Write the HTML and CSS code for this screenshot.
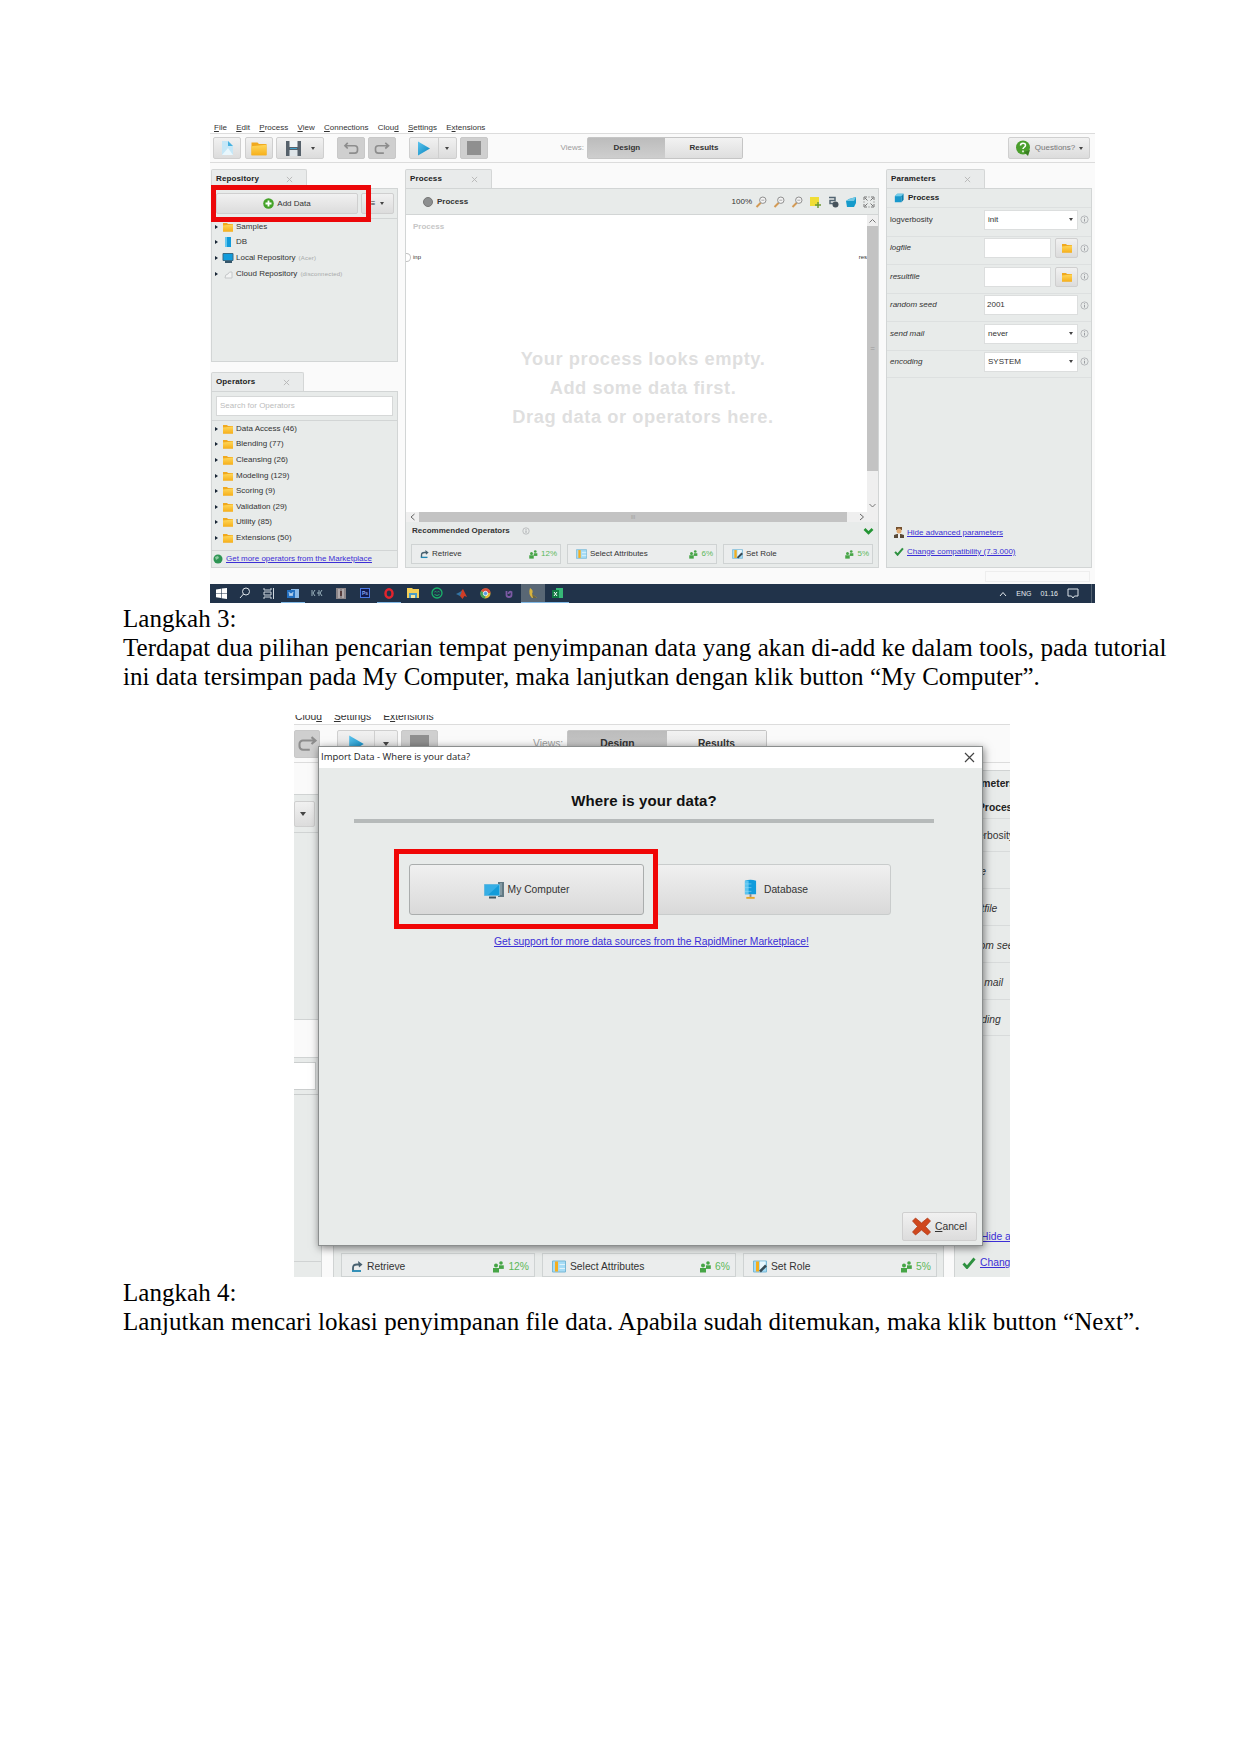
FILE: index.html
```html
<!DOCTYPE html>
<html lang="id">
<head>
<meta charset="utf-8">
<title>Langkah 3</title>
<link rel="stylesheet" href="styles.css">
</head>
<body>
<svg class="sprite" aria-hidden="true">
  <defs>
    <linearGradient id="blue" x1="0" y1="0" x2="1" y2="1"><stop offset="0" stop-color="#5cc4ee"/><stop offset="1" stop-color="#0583bd"/></linearGradient>
    <linearGradient id="yel" x1="0" y1="0" x2="0" y2="1"><stop offset="0" stop-color="#ffd75a"/><stop offset="1" stop-color="#f6b01c"/></linearGradient>
  </defs>
  <symbol id="folder" viewBox="0 0 12 10"><path d="M1 1h4l1 1h5v7.500H1z" fill="#f0a91f"/><path d="M1 3.500l10-1v7H1z" fill="url(#yel)"/></symbol>
  <symbol id="play" viewBox="0 0 14 14"><path d="M1 0l12 7-12 7z" fill="url(#blue)"/></symbol>
  <symbol id="redo" viewBox="0 0 16 14"><path d="M15 4H4a3 3 0 0 0-3 3v2a3 3 0 0 0 3 3h6M11.500 1L15 4l-3.500 3" fill="none" stroke="#8d8d8d" stroke-width="1.800"/></symbol>
  <symbol id="tab-x" viewBox="0 0 8 8"><path d="M1 1l6 6M7 1L1 7" stroke="#b4b4b4" stroke-width="1"/></symbol>
  <symbol id="people" viewBox="0 0 12 12"><g fill="#46a546"><circle cx="4" cy="4.500" r="2"/><path d="M1 7h6v4.500H1z"/><circle cx="9" cy="2" r="1.800"/><path d="M7 4.300h4.800v3.600H7z"/></g></symbol>
  <symbol id="retrieve" viewBox="0 0 12 12"><path d="M2 10V7.500Q2 4 6 4h3" fill="none" stroke="#47606f" stroke-width="1.800"/><path d="M7 .5L11.500 4 8 7z" fill="#47606f"/><path d="M1 10.500h9" stroke="#2187b3" stroke-width="1.800"/></symbol>
  <symbol id="select" viewBox="0 0 14 12"><path d="M.5.5h13v11H.5z" fill="#a6dcf6" stroke="#78b8d5"/><path d="M3 1h3v10H3z" fill="#f5ae1e"/><path d="M7.500 4H13M7.500 8H13" stroke="#dff3fb"/></symbol>
  <symbol id="role" viewBox="0 0 14 12"><path d="M.5.5h13v11H.5z" fill="#a6dcf6" stroke="#78b8d5"/><path d="M3 1h3v10H3z" fill="#f5ae1e"/><path d="M7 1h5.500v4L7 11z" fill="#e7f6fd"/><path d="M7 11l6-6" stroke="#374a55" stroke-width="2.500"/></symbol>
  <symbol id="check" viewBox="0 0 14 12"><path d="M1.500 6.500l3.500 4L12.500 1.500" fill="none" stroke="#2e9140" stroke-width="2.800"/></symbol>
  <symbol id="cube" viewBox="0 0 12 12"><path d="M1 4l3-3h7.500l-2.500 3v7H1z" fill="#1898cc"/><path d="M1 4l3-3h7.500L9 4z" fill="#75cdea"/><path d="M9 4l2.500-3v7L9 11z" fill="#077eae"/></symbol>
  <symbol id="info" viewBox="0 0 10 10"><circle cx="5" cy="5" r="4" fill="none" stroke="#a2a5a8" stroke-width=".8"/><path d="M5 4.300v3M5 2.500v1" stroke="#92959a"/></symbol>
  <symbol id="lens" viewBox="0 0 12 12"><path d="M1.500 11L6 6.500" stroke="#d39a55" stroke-width="2"/><circle cx="7.800" cy="4.200" r="3.200" fill="#f4f4f4" stroke="#8f8f8f"/><path d="M6.300 4.200h3" stroke="#999" stroke-width=".8"/></symbol>
  <symbol id="db" viewBox="0 0 14 22"><path d="M1 1.500Q7-.5 13 1.500V16H1z" fill="#109bdc"/><path d="M1 1.500h4V16H1z" fill="#5bc4f0"/><path d="M1 5h7M1 9h7M1 13h7" stroke="#98ddf7" stroke-width=".6"/><path d="M6 16h2v3H6z" fill="#888"/><path d="M2.500 19h9v2h-9z" fill="#e3a52a"/></symbol>
</svg>

<main class="page">
  <section class="shot main-shot">
    <nav class="menu"><span><u>F</u>ile</span><span><u>E</u>dit</span><span><u>P</u>rocess</span><span><u>V</u>iew</span><span><u>C</u>onnections</span><span>Clou<u>d</u></span><span><u>S</u>ettings</span><span>E<u>x</u>tensions</span></nav>
    <div class="toolbar">
      <div class="btn b28"><svg width="14" height="16" viewBox="0 0 14 16"><path d="M2 1h6l5 5v9H2z" fill="#c5e7f7"/><path d="M8 1l5 5H8z" fill="#48b1df"/><path d="M2 15L8 8l5 7z" fill="#e9f7fd"/></svg></div>
      <div class="btn b28"><svg width="18" height="15"><use href="#folder"/></svg></div>
      <div class="btn b48"><svg width="15" height="15" viewBox="0 0 15 15"><path d="M0 0h15v15H0z" fill="#56616b"/><path d="M3.500 0h8v6h-8z" fill="#f0f3f5"/><path d="M3.500 9h8v6h-8z" fill="#dfe5e9"/><path d="M4 7.500h7" stroke="#3f9fc9"/></svg><i class="caret"></i></div>
      <div class="btn b28 off gap12"><svg width="16" height="13" viewBox="0 0 16 14"><path d="M1.500 4H12a3 3 0 0 1 3 3v2a3 3 0 0 1-3 3H6M4.500 1L1.500 4l3 3" fill="none" stroke="#8d8d8d" stroke-width="1.800"/></svg></div>
      <div class="btn b28 off"><svg width="16" height="13"><use href="#redo"/></svg></div>
      <div class="btn b48 gap12 split"><span><svg width="14" height="15"><use href="#play"/></svg></span><i class="caret"></i></div>
      <div class="btn b28 off"><i class="stop"></i></div>
      <span class="views">Views:</span>
      <div class="switch"><b class="on">Design</b><b>Results</b></div>
      <div class="btn help"><svg width="16" height="16" viewBox="0 0 16 16"><circle cx="8" cy="7.500" r="7" fill="#4a9e2c"/><path d="M9 12l6-2-2 6z" fill="#397f20"/><path d="M5.500 5.500q0-2.300 2.500-2.300t2.500 2q0 1.300-1.500 2.300-1 .7-1 1.500M8 10.500v1.700" stroke="#fff" stroke-width="1.500" fill="none"/></svg>Questions?<i class="caret"></i></div>
    </div>
    <div class="workspace">
      <div class="col-left">
        <div class="tab w96">Repository<svg width="7" height="7"><use href="#tab-x"/></svg></div>
        <div class="panel repo">
          <div class="repo-bar"><div class="btn add"><svg width="11" height="11" viewBox="0 0 11 11"><circle cx="5.500" cy="5.500" r="5.300" fill="#45a329"/><path d="M5.500 2.500v6M2.500 5.500h6" stroke="#fff" stroke-width="1.800"/></svg>Add Data</div><div class="btn more"><span>≡</span><i class="caret"></i></div><div class="mark mark-add"></div></div>
          <ul class="tree">
            <li><i></i><svg width="12" height="10"><use href="#folder"/></svg>Samples</li>
            <li><i></i><svg width="12" height="10" viewBox="0 0 12 10"><path d="M3 0h6v10H3z" fill="#119bdb"/><path d="M3 0h2v10H3z" fill="#65c7ee"/></svg>DB</li>
            <li><i></i><svg width="12" height="10" viewBox="0 0 12 10"><path d="M1 .5h10v7H1z" fill="#119bdb" stroke="#386b86"/><path d="M3 9h7" stroke="#36566a" stroke-width="2"/></svg>Local Repository <small>(Acer)</small></li>
            <li><i></i><svg width="12" height="10" viewBox="0 0 12 10"><path d="M3 9h7V3Q7 2 6 5 3 5 3 9z" fill="#f2f3f3" stroke="#c5c8c9"/></svg>Cloud Repository <small>(disconnected)</small></li>
          </ul>
        </div>
        <div class="tab w93">Operators<svg width="7" height="7"><use href="#tab-x"/></svg></div>
        <div class="panel ops">
          <div class="search-row"><div class="search">Search for Operators</div></div>
          <ul class="tree">
            <li><i></i><svg width="12" height="10"><use href="#folder"/></svg>Data Access (46)</li>
            <li><i></i><svg width="12" height="10"><use href="#folder"/></svg>Blending (77)</li>
            <li><i></i><svg width="12" height="10"><use href="#folder"/></svg>Cleansing (26)</li>
            <li><i></i><svg width="12" height="10"><use href="#folder"/></svg>Modeling (129)</li>
            <li><i></i><svg width="12" height="10"><use href="#folder"/></svg>Scoring (9)</li>
            <li><i></i><svg width="12" height="10"><use href="#folder"/></svg>Validation (29)</li>
            <li><i></i><svg width="12" height="10"><use href="#folder"/></svg>Utility (85)</li>
            <li><i></i><svg width="12" height="10"><use href="#folder"/></svg>Extensions (50)</li>
          </ul>
          <div class="market"><svg width="10" height="10" viewBox="0 0 10 10"><circle cx="5" cy="5" r="4.500" fill="#2e9554"/><path d="M2 3l3-1 1 2-3 2z" fill="#8dcba1"/></svg><a>Get more operators from the Marketplace</a></div>
        </div>
      </div>
      <div class="col-mid">
        <div class="tab w87">Process<svg width="7" height="7"><use href="#tab-x"/></svg></div>
        <div class="panel proc">
          <div class="proc-head"><i class="dot"></i><b>Process</b><span class="zoom">100%</span>
            <svg width="12" height="12"><use href="#lens"/></svg><svg width="12" height="12"><use href="#lens"/></svg><svg width="12" height="12"><use href="#lens"/></svg>
            <svg width="12" height="12" viewBox="0 0 12 12"><path d="M1 1h9v9H1z" fill="#f0dd36"/><path d="M9 6v6M6 9h6" stroke="#6c9a35" stroke-width="1.500"/></svg>
            <svg width="12" height="12" viewBox="0 0 12 12"><path d="M2 1.500h6v3H3v3h4" fill="none" stroke="#536572" stroke-width="1.500"/><circle cx="8.500" cy="8.500" r="3" fill="#46525b"/></svg>
            <svg width="12" height="12" viewBox="0 0 12 12"><path d="M1 5l3-2 7-2v6l-2 4H2z" fill="#169bcb"/><path d="M1 5l3-2 7-2-2 4z" fill="#72c8e4"/></svg>
            <svg width="12" height="12" viewBox="0 0 12 12"><path d="M1 4V1h3M8 1h3v3M11 8v3H8M4 11H1V8M2 2l2.500 2.500M10 2L7.500 4.500M2 10l2.500-2.500M10 10L7.500 7.500M1 5.500v1M11 5.500v1M5.500 1h1M5.500 11h1" fill="none" stroke="#777"/></svg>
          </div>
          <div class="canvas-row">
            <div class="canvas">
              <div class="canvas-name">Process</div>
              <div class="ports"><span><i class="port"></i>inp</span><span>res</span></div>
              <div class="empty">Your process looks empty.<br><span>Add some data first.</span><br><em>Drag data or operators here.</em></div>
            </div>
            <div class="vbar"><svg width="9" height="11" viewBox="0 0 9 11"><path d="M1.500 7.500l3-3 3 3" fill="none" stroke="#777"/></svg><div class="vthumb">=</div><svg width="9" height="11" viewBox="0 0 9 11"><path d="M1.500 4l3 3 3-3" fill="none" stroke="#777"/></svg></div>
          </div>
          <div class="hbar"><svg width="13" height="10" viewBox="0 0 13 10"><path d="M8.500 2L5 5l3.500 3" fill="none" stroke="#666"/></svg><div class="hthumb">III</div><svg width="13" height="10" viewBox="0 0 13 10"><path d="M4 2l3.500 3L4 8" fill="none" stroke="#666"/></svg></div>
          <div class="rec-head"><b>Recommended Operators</b><svg width="8" height="8"><use href="#info"/></svg><svg class="chev" width="11" height="8" viewBox="0 0 11 8"><path d="M1.500 2l4 4 4-4" fill="none" stroke="#239534" stroke-width="2.600"/></svg></div>
          <div class="cards">
            <div class="card"><svg width="9" height="10"><use href="#retrieve"/></svg>Retrieve<svg class="ppl" width="10" height="9"><use href="#people"/></svg><span>12%</span></div>
            <div class="card"><svg width="11" height="10"><use href="#select"/></svg>Select Attributes<svg class="ppl" width="10" height="9"><use href="#people"/></svg><span>6%</span></div>
            <div class="card"><svg width="11" height="10"><use href="#role"/></svg>Set Role<svg class="ppl" width="10" height="9"><use href="#people"/></svg><span>5%</span></div>
          </div>
        </div>
      </div>
      <div class="col-right">
        <div class="tab w99">Parameters<svg width="7" height="7"><use href="#tab-x"/></svg></div>
        <div class="panel params">
          <div class="param-head"><svg width="10" height="10"><use href="#cube"/></svg>Process</div>
          <div class="prow"><label class="plain">logverbosity</label><div class="field">init<i class="caret"></i></div><svg width="9" height="9"><use href="#info"/></svg></div>
          <div class="prow"><label>logfile</label><div class="field short"></div><div class="btn pick"><svg width="12" height="10"><use href="#folder"/></svg></div><svg width="9" height="9"><use href="#info"/></svg></div>
          <div class="prow"><label>resultfile</label><div class="field short"></div><div class="btn pick"><svg width="12" height="10"><use href="#folder"/></svg></div><svg width="9" height="9"><use href="#info"/></svg></div>
          <div class="prow"><label>random seed</label><div class="field num">2001</div><svg width="9" height="9"><use href="#info"/></svg></div>
          <div class="prow"><label>send mail</label><div class="field">never<i class="caret"></i></div><svg width="9" height="9"><use href="#info"/></svg></div>
          <div class="prow last"><label>encoding</label><div class="field">SYSTEM<i class="caret"></i></div><svg width="9" height="9"><use href="#info"/></svg></div>
          <div class="plinks">
            <div><svg width="10" height="11" viewBox="0 0 10 11"><path d="M2 0h6v3H2z" fill="#74502d"/><circle cx="5" cy="4" r="2.500" fill="#e1aa74"/><path d="M0 11V8l3-1h4l3 1v3z" fill="#594937"/><path d="M4 7h2v4H4z" fill="#eee"/></svg><a>Hide advanced parameters</a></div>
            <div><svg width="10" height="9"><use href="#check"/></svg><a>Change compatibility (7.3.000)</a></div>
          </div>
        </div>
        <div class="memory"></div>
      </div>
    </div>
    <footer class="taskbar">
      <span><svg width="11" height="11" viewBox="0 0 11 11"><path d="M0 1.500l5-.8V5H0zM5.600.6L11 0v5H5.600zM0 5.600h5V10l-5-.8zM5.600 5.600H11V11l-5.400-.8z" fill="#fff"/></svg></span>
      <span><svg width="12" height="12" viewBox="0 0 12 12"><circle cx="7" cy="4.500" r="3.500" fill="none" stroke="#dfe6eb"/><path d="M4.500 7L1 11" stroke="#dfe6eb"/></svg></span>
      <span><svg width="12" height="11" viewBox="0 0 12 11"><path d="M1 0v2h7V0M1 11V9h7v2M1 4h7v3H1zM10.500 0v11" fill="none" stroke="#cfd8df"/></svg></span>
      <span class="open"><svg width="12" height="11" viewBox="0 0 12 11"><path d="M4 1h8v9H4z" fill="#8dbbe9"/><path d="M0 2h8v8H0z" fill="#2370c1"/><path d="M2 4l1 4 1-3 1 3 1-4" fill="none" stroke="#d9e8f8" stroke-width=".8"/></svg></span>
      <span><svg width="12" height="10" viewBox="0 0 12 10"><path d="M1 2v6M4 2L2 5l2 3M6 5h2M8 2v6M11 2L9 5l2 3" stroke="#9bb2bd" fill="none"/></svg></span>
      <span><svg width="10" height="11" viewBox="0 0 10 11"><path d="M0 0h10v11H0z" fill="#8b8588"/><path d="M3 1v9M7 1v9" stroke="#d3cccd"/><path d="M4 3h2v5H4z" fill="#563d3d"/></svg></span>
      <span><b class="ps">Ps</b></span>
      <span class="open"><svg width="10" height="11" viewBox="0 0 10 11"><ellipse cx="5" cy="5.500" rx="3.500" ry="4.200" fill="none" stroke="#e2242d" stroke-width="2.500"/></svg></span>
      <span><svg width="12" height="10" viewBox="0 0 12 10"><path d="M0 0h5l1 1h6v9H0z" fill="#f4cf57"/><path d="M2 5h8v5H2z" fill="#4c9cc5"/><path d="M4 7h4v3H4z" fill="#f8e59a"/></svg></span>
      <span><svg width="12" height="12" viewBox="0 0 12 12"><circle cx="6" cy="6" r="5" fill="none" stroke="#1ab36b" stroke-width="1.300"/><path d="M3.500 5q1-1 2 0M6.500 5q1-1 2 0M3.500 7.500q2.500 2 5 0" fill="none" stroke="#1ab36b"/></svg></span>
      <span><svg width="11" height="11" viewBox="0 0 11 11"><path d="M3.500 5L7 1l4 8-2.500-1L6.500 11 4 8z" fill="#cf3d26"/><path d="M0 6l4-2 2-1-2 5z" fill="#3374a4"/></svg></span>
      <span><svg width="11" height="11" viewBox="0 0 11 11"><circle cx="5.500" cy="5.500" r="5" fill="#e3b934"/><path d="M1 3a5 5 0 0 1 9.500 2H5z" fill="#d94a3c"/><path d="M1 3a5 5 0 0 0 4 7.500L6 6z" fill="#42a058"/><circle cx="5.500" cy="5.500" r="2.200" fill="#5a9ee0" stroke="#fff" stroke-width=".8"/></svg></span>
      <span><svg width="10" height="11" viewBox="0 0 10 11"><path d="M2.500 3v4q0 2 2.500 2t2.500-2V4Q5 3 4.500 6" fill="none" stroke="#7d5aa5" stroke-width="1.800"/></svg></span>
      <span class="open active"><svg width="10" height="11" viewBox="0 0 10 11"><path d="M2 0q4 2 2 6l5 4H4Q0 6 2 0z" fill="#d7b33f"/><path d="M4 6l5 4H5z" fill="#6d6542"/></svg></span>
      <span class="open"><svg width="11" height="11" viewBox="0 0 11 11"><path d="M4 0h7v10H4z" fill="#37b777"/><path d="M0 2h7v8H0z" fill="#127943"/><path d="M2 4l3 4M5 4L2 8" stroke="#fff"/></svg></span>
      <div class="tray"><svg width="8" height="6" viewBox="0 0 8 6"><path d="M1 5l3-3.500L7 5" fill="none" stroke="#e4e9ed"/></svg><em>ENG</em><em>01.16</em><svg width="12" height="11" viewBox="0 0 12 11"><path d="M1 1h10v7H7.500L6 10 4.500 8H1z" fill="none" stroke="#dce3e8"/></svg></div>
    </footer>
  </section>

  <div class="copy">Langkah 3:<br>Terdapat dua pilihan pencarian tempat penyimpanan data yang akan di-add ke dalam tools, pada tutorial<br>ini data tersimpan pada My Computer, maka lanjutkan dengan klik button “My Computer”.</div>

  <section class="shot import-shot">
    <nav class="menu"><span>Clou<u>d</u></span><span><u>S</u>ettings</span><span>E<u>x</u>tensions</span></nav>
    <div class="toolbar">
      <div class="btn off r26"><svg width="19" height="16"><use href="#redo"/></svg></div>
      <div class="btn split big"><span><svg width="17" height="18"><use href="#play"/></svg></span><i class="caret"></i></div>
      <div class="btn off stopbtn"><i class="stop"></i></div>
      <span class="views">Views:</span>
      <div class="switch"><b class="on">Design</b><b>Results</b></div>
    </div>
    <div class="behind">
      <div class="slice">
        <div class="s-gap"></div>
        <div class="s-bar"><div class="btn"><i class="caret"></i></div></div>
        <div class="s-tree"></div>
        <div class="s-white"></div>
        <div class="s-search"><div></div></div>
        <div class="s-ops"></div>
        <div class="s-foot"></div>
      </div>
      <div class="strip">
        <div class="cards">
          <div class="card"><svg width="12" height="13"><use href="#retrieve"/></svg>Retrieve<svg class="ppl" width="12" height="12"><use href="#people"/></svg><span>12%</span></div>
          <div class="card"><svg width="14" height="13"><use href="#select"/></svg>Select Attributes<svg class="ppl" width="12" height="12"><use href="#people"/></svg><span>6%</span></div>
          <div class="card"><svg width="14" height="13"><use href="#role"/></svg>Set Role<svg class="ppl" width="12" height="12"><use href="#people"/></svg><span>5%</span></div>
        </div>
      </div>
      <div class="edge">
        <b class="e-tab">Parameters</b><b class="e-head">Process</b>
        <span class="plain">logverbosity</span><span>logfile</span><span>resultfile</span><span>random seed</span><span>send mail</span><span>encoding</span>
        <div class="e-links"><a class="e-hide">Hide advanced</a><div><svg width="14" height="12"><use href="#check"/></svg><a>Change</a></div></div>
      </div>
    </div>
    <div class="dialog">
      <div class="title"><span>Import Data - Where is your data?</span><svg width="11" height="11" viewBox="0 0 11 11"><path d="M1 1l9 9M10 1l-9 9" stroke="#444" stroke-width="1.200"/></svg></div>
      <h2>Where is your data?</h2>
      <div class="choices">
        <div class="choice first"><svg width="21" height="18" viewBox="0 0 21 18"><path d="M14 1h6v15h-6z" fill="#607883"/><path d="M17 2v12" stroke="#a8bcc4"/><path d="M.5 3.500h15v11H.5z" fill="#139cda" stroke="#62b8df"/><path d="M1 4h14L4 14H1z" fill="#36aee5"/><path d="M5 16.500h7" stroke="#3d5560" stroke-width="2"/></svg>My Computer<div class="mark mark-pc"></div></div>
        <div class="choice second"><svg class="dbi" width="13" height="21"><use href="#db"/></svg>Database</div>
      </div>
      <a class="support">Get support for more data sources from the RapidMiner Marketplace!</a>
      <div class="actions"><div class="btn cancel"><svg width="19" height="19" viewBox="0 0 19 19"><path d="M3.500 1L9.500 6 15.500 1 18.500 4 13.500 9.500 18.500 15 15.500 18 9.500 13 3.500 18 .5 15 5.500 9.500.5 4z" fill="#cf481e" stroke="#ad3716" stroke-width=".7"/></svg><span><u>C</u>ancel</span></div></div>
    </div>
  </section>

  <div class="copy">Langkah 4:<br>Lanjutkan mencari lokasi penyimpanan file data. Apabila sudah ditemukan, maka klik button “Next”.</div>
</main>
</body>
</html>
```
FILE: styles.css
```css
* { box-sizing: border-box; }
body { margin: 0; background: #fff; font-family: "Liberation Sans", Arial, sans-serif; }
.sprite { position: absolute; width: 0; height: 0; }
svg { display: block; flex: none; }
ul { list-style: none; margin: 0; padding: 0; }
a { color: #3c2fd6; text-decoration: underline; }
em { font-style: normal; }
.page { width: 1240px; height: 1755px; padding-top: 116px; overflow: hidden; }

.copy { margin-left: 123px; font: 25px/29px "Liberation Serif", "Times New Roman", serif; color: #000; white-space: nowrap; padding-top: 1px; letter-spacing: .032px; }

/* Shared application chrome */
.shot { position: relative; overflow: hidden; background: #fafafa; color: #333; white-space: nowrap; }
.menu { display: flex; background: #fff; border-bottom: 1px solid #dcdcdc; }
.toolbar { display: flex; align-items: center; background: #fafafa; border-bottom: 1px solid #dcdcdc; }
.btn { display: flex; align-items: center; justify-content: center; border: 1px solid #cfcfcf; border-radius: 2px; background: linear-gradient(#f1f1f1, #dcdcdc); flex: none; }
.btn.off { background: #cfcfcf; border-color: #c8c8c8; }
.caret { width: 0; height: 0; border: 2.5px solid transparent; border-top: 3.5px solid #444; border-bottom: 0; flex: none; }
.stop { width: 14px; height: 14px; background: #8f8f8f; }
.switch { display: flex; border: 1px solid #c5c5c5; border-radius: 2px; }
.switch b { display: flex; align-items: center; justify-content: center; background: linear-gradient(#f2f2f2, #dedede); }
.switch .on { background: linear-gradient(#bcbcbc, #cecece); }
.views { color: #9d9d9d; }
.mark { position: absolute; border: 5px solid #f00606; }

/* Main window */
.main-shot { width: 885px; height: 487px; margin-left: 210px; font-size: 8px; line-height: 10px; display: flex; flex-direction: column; }
.main-shot .menu { height: 18px; padding: 7px 0 0 4px; gap: 9.3px; flex: none; }
.main-shot .toolbar { height: 29px; padding: 0 5px 0 3px; gap: 3.5px; flex: none; }
.main-shot .toolbar .btn { height: 22px; }
.toolbar .b28 { width: 28px; }
.toolbar .b48 { width: 48px; gap: 10px; }
.toolbar .gap12 { margin-left: 9px; }
.toolbar .split { gap: 0; justify-content: flex-start; }
.split span { display: flex; justify-content: center; align-self: stretch; align-items: center; width: 29px; border-right: 1px solid #cfcfcf; }
.split .caret { margin-left: 6px; }
.main-shot .views { margin-left: 69px; }
.main-shot .switch { height: 22px; }
.main-shot .switch b { width: 77px; }
.help { margin-left: auto; width: 82px; gap: 4px; color: #777; }
.workspace { display: flex; gap: 7px; padding: 6px 3px 0 1px; height: 421px; flex: none; }
.col-left { width: 187px; }
.col-mid { width: 474px; }
.col-right { width: 206px; }
.tab { display: flex; justify-content: space-between; align-items: center; height: 19px; border: 1px solid #d4d6d6; border-bottom: 0; background: #e9ebeb; font-weight: bold; color: #222; padding: 0 13px 0 4px; border-radius: 2px 2px 0 0; letter-spacing: .12px; }
.w96 { width: 96px; } .w93 { width: 93px; } .w87 { width: 87px; } .w99 { width: 99px; }
.panel { background: #e8ebea; border: 1px solid #d2d5d5; }
.repo { height: 174px; margin-bottom: 10px; }
.repo-bar { position: relative; display: flex; gap: 3px; height: 30px; padding: 4px 4px 0; border-bottom: 1px solid #d2d5d5; }
.repo-bar .btn { height: 21px; }
.add { width: 142px; gap: 3px; }
.more { width: 33px; gap: 5px; }
.mark-add { left: -1px; top: -4px; width: 160px; height: 37px; border-color: #ec0709; }
.tree li { display: flex; align-items: center; height: 15.6px; padding-left: 3px; }
.tree li i { border: 2.5px solid transparent; border-left: 3.5px solid #172434; border-right: 0; margin-right: 4px; }
.tree li svg { margin-right: 2px; }
.tree small { font-size: 6px; color: #a7a9a9; margin-left: 3px; letter-spacing: .2px; }
.ops { height: 177px; }
.search-row { height: 29px; padding: 4px 4px; border-bottom: 1px solid #d2d5d5; }
.search { height: 20px; background: #fff; border: 1px solid #d6d8d8; padding: 4px 3px; color: #bcbcbc; }
.ops .tree { height: 130px; border-bottom: 1px solid #d2d5d5; }
.market { display: flex; align-items: center; gap: 3px; padding-left: 1px; height: 15px; letter-spacing: -.02px; }
.proc { height: 380px; }
.proc-head { display: flex; align-items: center; height: 26px; padding: 0 3px 0 17px; gap: 6px; border-bottom: 1px solid #d2d5d5; }
.dot { width: 10px; height: 10px; border-radius: 50%; background: #8d8f90; border: 1px solid #777; margin-right: -2px; }
.zoom { margin-left: auto; margin-right: -3px; }
.canvas-row { display: flex; height: 297px; }
.canvas { flex: 1; background: #fff; }
.canvas-name { padding: 7px 7px 0; font-weight: bold; color: #c6c6c6; }
.ports { display: flex; justify-content: space-between; margin-top: 20px; font-size: 6px; }
.ports span { display: flex; align-items: center; gap: 2px; }
.port { width: 5px; height: 9px; border: 1px solid #c2c2c2; border-left: 0; border-radius: 0 5px 5px 0; }
.empty { margin-top: 82px; padding-left: 13px; text-align: center; font-size: 18.3px; line-height: 29px; font-weight: bold; color: #dfdfdf; letter-spacing: .55px; }
.vbar { width: 11px; background: #efefef; display: flex; flex-direction: column; align-items: center; }
.vthumb { width: 11px; height: 245px; background: #c3c3c3; color: #999; display: flex; align-items: center; justify-content: center; margin-bottom: 29px; }
.hbar { height: 10px; display: flex; align-items: center; background: #efefef; }
.hthumb { width: 428px; height: 10px; background: #c3c3c3; color: #999; font-size: 5px; text-align: center; margin-right: 9px; }
.rec-head { display: flex; align-items: center; height: 18px; padding: 0 4px 0 6px; gap: 12px; }
.chev { margin-left: auto; }
.cards { display: flex; }
.main-shot .cards { gap: 6px; padding: 4px 5px; }
.main-shot .card { width: 150px; height: 20px; padding: 0 3px 0 8px; gap: 3px; }
.card { display: flex; align-items: center; border: 1px solid #cfd3d3; background: #ebeded; }
.card .ppl { margin-left: auto; }
.card span { color: #5cb85a; }
.params { height: 380px; display: flex; flex-direction: column; }
.param-head { display: flex; align-items: center; gap: 4px; height: 18px; padding-left: 7px; font-weight: bold; color: #222; }
.prow { display: flex; align-items: center; height: 28.5px; border-top: 1px solid #dde0e0; padding: 0 2px 4px 3px; }
.prow label { width: 94px; font-style: italic; }
.prow .plain { font-style: normal; }
.prow > svg { margin-left: auto; }
.prow.last { border-bottom: 1px solid #dde0e0; }
.field { width: 94px; height: 20px; background: #fff; border: 1px solid #dcdede; display: flex; align-items: center; justify-content: space-between; padding: 0 4px 0 3px; }
.field.num { padding-left: 2px; }
.field.short { width: 67px; }
.pick { width: 23px; height: 20px; margin-left: 4px; }
.plinks { margin-top: auto; padding: 0 0 6px 7px; }
.plinks div { display: flex; align-items: center; gap: 3px; height: 19px; }
.memory { width: 105px; height: 11px; margin: 3px 0 0 99px; border: 1px solid #eee; }
.taskbar { flex: none; height: 19px; background: #21334a; display: flex; color: #e6ebef; }
.taskbar > span { width: 24px; display: flex; align-items: center; justify-content: center; border-bottom: 1px solid transparent; }
.taskbar > span:first-child { width: 23px; }
.taskbar .open { border-bottom: 1px solid #81b9e7; }
.taskbar .active { background: #596775; }
.ps { border: 1px solid #4b78e3; background: #111a50; color: #8ba9f2; font-size: 5px; line-height: 8px; width: 10px; height: 10px; text-align: center; }
.tray { margin-left: auto; display: flex; align-items: center; gap: 9px; margin-right: 3px; border-right: 1px solid #526171; padding-right: 12px; font-size: 7px; }

/* Import window */
.import-shot { width: 716px; height: 562px; margin: 24px 0 0 294px; font-size: 10.3px; line-height: 12px; display: flex; flex-direction: column; }
.import-shot .menu { height: 10px; gap: 12px; padding-left: 1px; flex: none; }
.import-shot .menu span { margin-top: -4px; }
.import-shot .toolbar { height: 38px; flex: none; align-items: flex-start; padding-top: 5px; }
.import-shot .toolbar .btn, .import-shot .switch { height: 28px; }
.r26 { width: 26px; }
.big { width: 61px; margin-left: 17px; }
.big span { width: 37px; }
.import-shot .caret { border-width: 3.5px; border-top-width: 4.5px; border-bottom-width: 0; }
.big .caret { margin-left: 8px; }
.stopbtn { width: 37px; margin-left: 3px; }
.stopbtn .stop { width: 19px; height: 19px; }
.import-shot .views { margin: 8px 0 0 95px; width: 34px; }
.import-shot .switch b { width: 99px; }
.behind { display: flex; flex: 1; min-height: 0; }
.slice { width: 28px; background: #e8ebea; border-right: 1px solid #d4d7d7; }
.s-gap { height: 32px; background: #fafafa; border-bottom: 1px solid #d0d3d3; }
.s-bar { height: 38px; padding: 6px 6px 0 0; border-bottom: 1px solid #d0d3d3; }
.s-bar .btn { height: 26px; padding-right: 3px; }
.s-tree { height: 186px; }
.s-white { height: 39px; background: #fafafa; border: 1px solid #d0d3d3; border-width: 1px 0; }
.s-search { height: 37px; padding: 4px 5px 4px 0; border-bottom: 1px solid #c9cccc; }
.s-search div { height: 28px; background: #fff; border: 1px solid #cbcece; border-left: 0; }
.s-ops { height: 167px; border-bottom: 1px solid #d0d3d3; }
.strip { width: 611px; margin-left: 11px; background: #e8ebea; border: 1px solid #d0d3d3; border-bottom: 0; display: flex; align-items: flex-end; }
.import-shot .cards { gap: 7px; padding-left: 7px; }
.import-shot .card { width: 194px; height: 24px; padding: 3px 5px 0 9px; gap: 4px; }
.edge { width: 56px; margin-left: 10px; background: #e8ebea; border-left: 1px solid #d0d3d3; display: flex; flex-direction: column; margin-top: 7px; overflow: hidden; }
.edge > * { flex: none; }
.edge > b, .edge > span { display: flex; align-items: center; padding-left: 4px; border-bottom: 1px solid #d8dbdb; }
.edge > b { color: #222; border: 0; }
.edge .e-tab { height: 27px; border-top: 1px solid #d0d3d3; }
.edge .e-head { height: 22px; padding-left: 23px; border-bottom: 1px solid #d8dbdb; }
.edge > span { height: 36.9px; font-style: italic; padding-top: 4px; }
.edge > .plain { font-style: normal; height: 33px; padding-top: 2px; }
.e-links { margin-top: auto; padding-bottom: 8px; }
.e-hide { display: block; margin: 0 0 14px 26px; }
.e-links div { display: flex; align-items: center; gap: 4px; padding-left: 7px; }
.dialog { position: absolute; left: 24px; top: 31px; width: 665px; height: 500px; border: 1px solid #8b8e8e; background: #e8ebea; box-shadow: 1px 2px 8px rgba(0,0,0,.5); display: flex; flex-direction: column; }
.title { height: 21px; background: #fff; display: flex; align-items: center; justify-content: space-between; padding: 0 7px 0 2px; font: 9.5px/14px "Open Sans", "Noto Sans", sans-serif; color: #222; }
.title span { margin-top: -1px; }
.dialog h2 { margin: 24px 48px 0 35px; height: 31px; border-bottom: 4px solid #b6baba; text-align: center; font-size: 15px; line-height: 18px; color: #111; letter-spacing: .12px; }
.choices { display: flex; gap: 12px; margin: 41px 0 0 90px; }
.choice { position: relative; width: 235px; height: 51px; display: flex; align-items: center; justify-content: center; gap: 3px; border: 1px solid #c9cccc; border-radius: 3px; background: linear-gradient(#f0f0f0, #d9d9d9); }
.choice.first { border-color: #aaadad; }
.choice.second { padding-left: 5px; }
.dbi { margin-right: 4px; }
.mark-pc { left: -16px; top: -16px; width: 264px; height: 80px; z-index: 1; }
.support { margin: 21px 0 0 175px; align-self: flex-start; }
.actions { margin-top: auto; display: flex; justify-content: flex-end; padding: 0 5px 4px; }
.cancel { width: 75px; height: 29px; gap: 4px; }
```
